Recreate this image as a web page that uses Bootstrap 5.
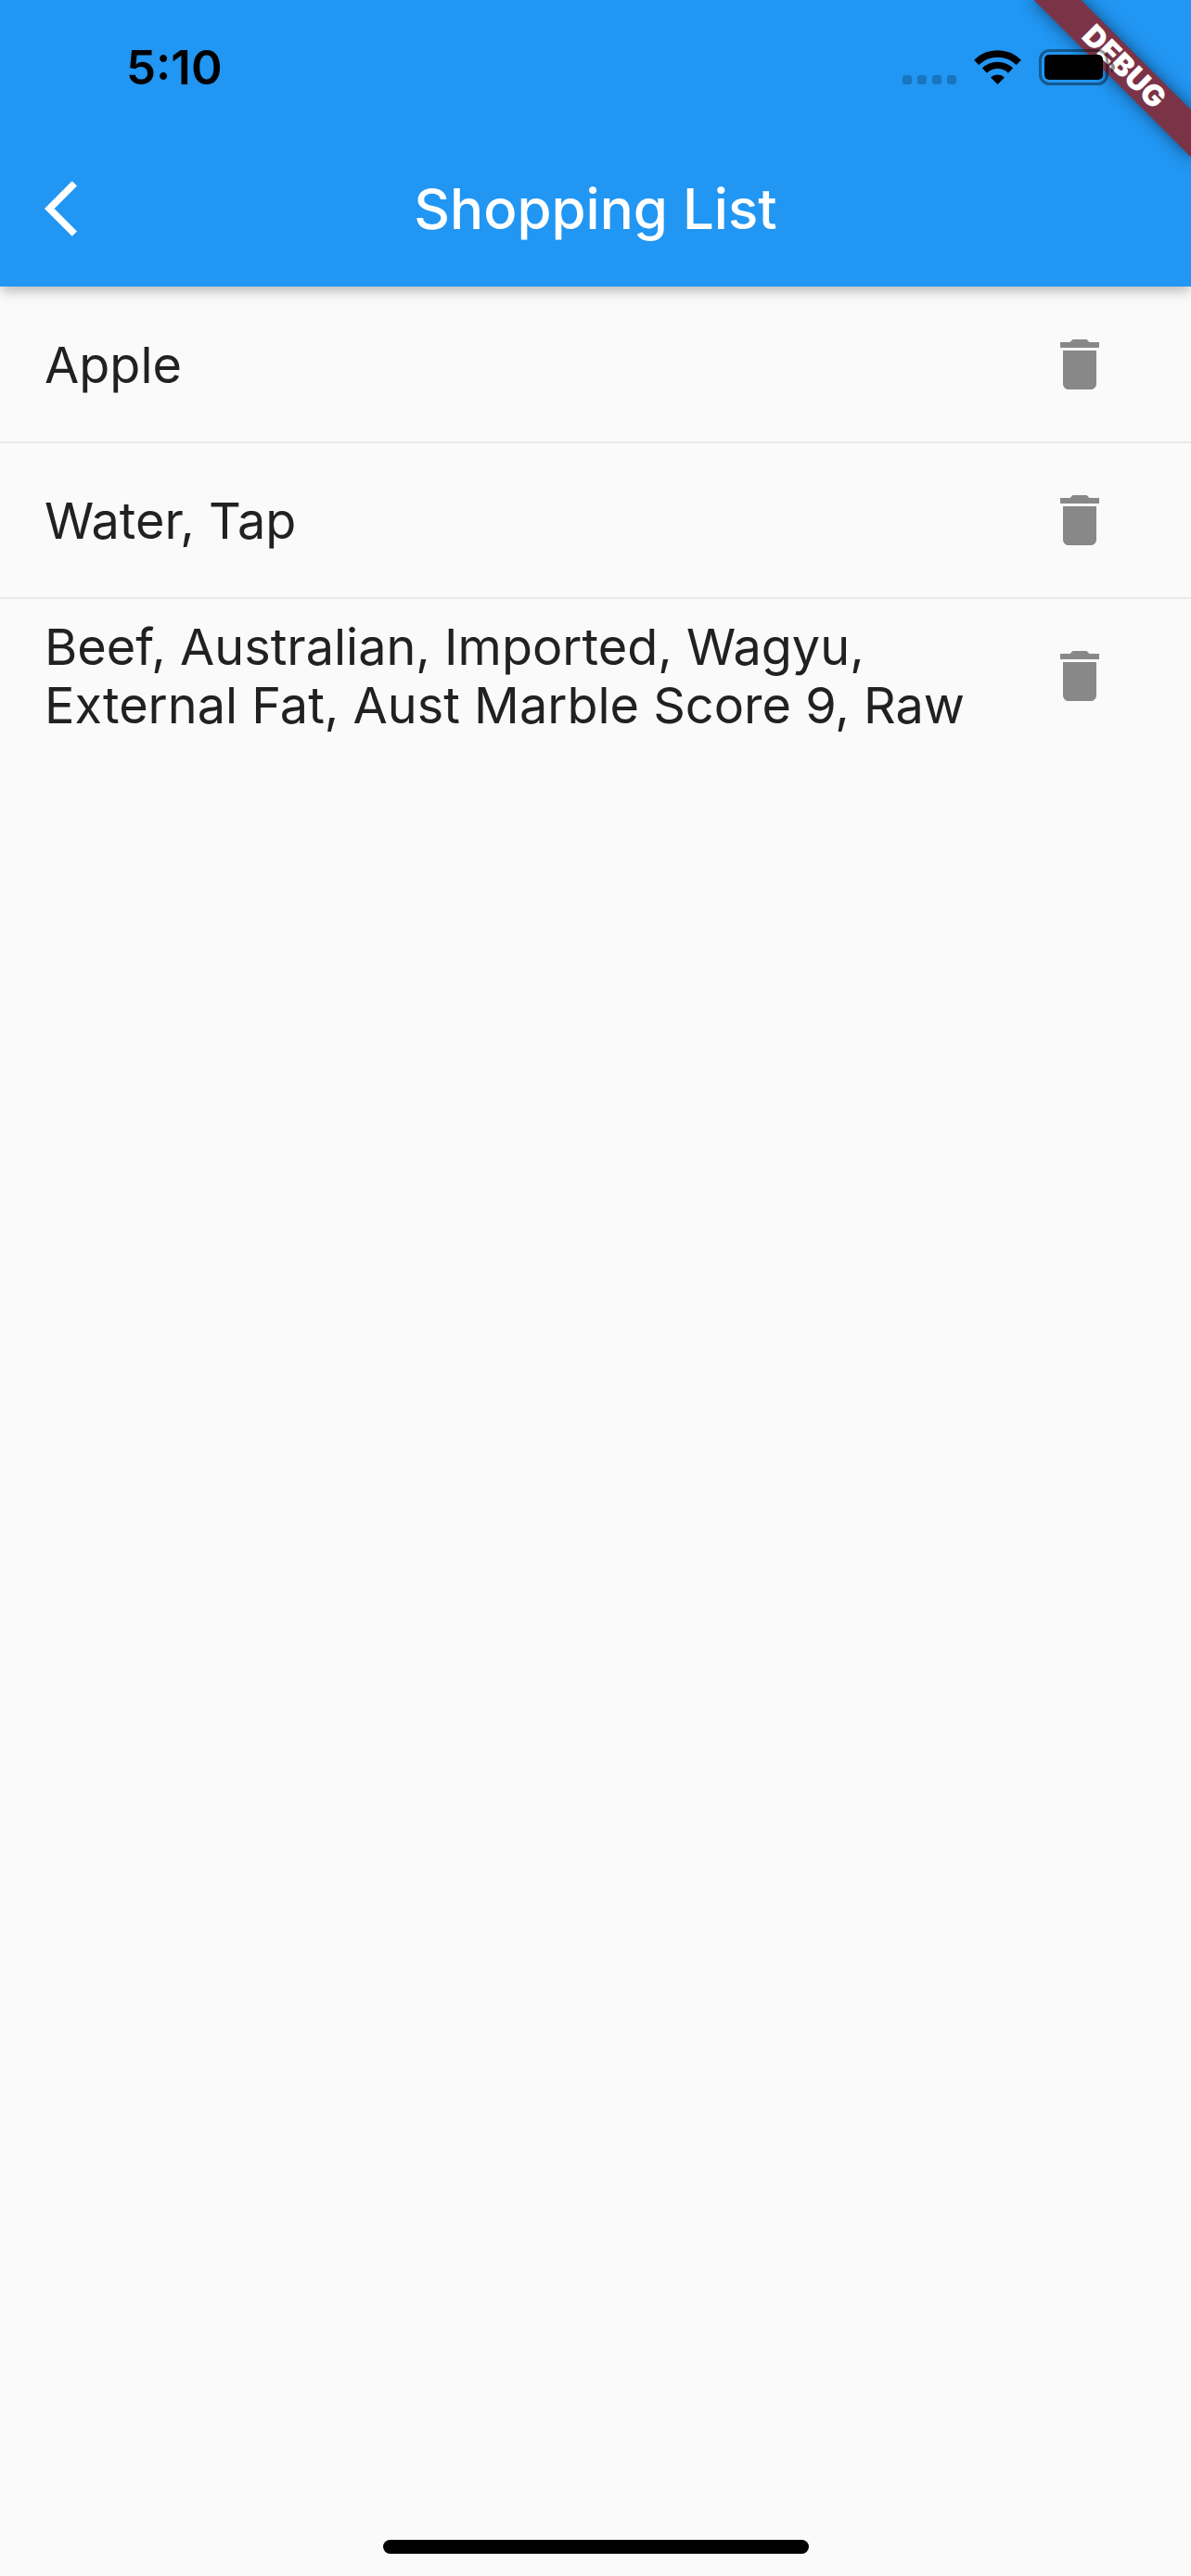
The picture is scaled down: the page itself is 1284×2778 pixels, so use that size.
<!DOCTYPE html>
<html lang="en">
<head>
<meta charset="utf-8">
<meta name="viewport" content="width=device-width, initial-scale=1">
<title>Shopping List</title>
<link rel="stylesheet" href="https://cdn.jsdelivr.net/npm/bootstrap@5.3.0/dist/css/bootstrap.min.css">
<style>
  body { background: #fafafa; color: #212121; font-family: Inter, "Noto Sans", sans-serif; }
  .top-area { background: #2196f3; box-shadow: 0 6px 12px -1px rgba(0, 0, 0, .26); }
  .status-bar { height: 141px; padding: 4px 80px 0 136px; color: #000; }
  .clock { font-size: 51px; font-weight: 600; line-height: 60px; }
  .status-icons { gap: 19px; z-index: 3; }
  .app-bar { min-height: 168px; padding: 0 48px; color: #fff; }
  .app-title { font-size: 60px; font-weight: 500; line-height: 72px; }
  .bar-side { width: 144px; }
  .shopping-row { min-height: 168px; padding: 0 48px; }
  .shopping-row + .shopping-row { box-shadow: 0 -1px #e9e9e9, inset 0 1px #e9e9e9; }
  .item-name { font-size: 54px; line-height: 63px; }
  .delete-btn { width: 144px; height: 144px; color: #888; }
  .corner-clip { width: 240px; height: 240px; z-index: 2; pointer-events: none; }
  .ribbon {
    top: 54px; right: -48px; width: 240px; height: 36px;
    transform: rotate(45deg);
    background: #7b3347;
    color: #fff; font-size: 32px; font-weight: 900; line-height: 36px;
    box-shadow: 0 0 18px rgba(0, 0, 0, .5);
  }
  .home-indicator { width: 459px; height: 15px; border-radius: 8px; background: #000; }
  .home-area { padding-bottom: 24px; }
</style>
</head>
<body>
<div class="d-flex flex-column min-vh-100 position-relative">
  <header class="top-area position-relative">
    <div class="status-bar d-flex align-items-center justify-content-between">
      <time class="clock">5:10</time>
      <div class="status-icons d-flex align-items-center position-relative">
        <svg width="58" height="38" viewBox="0 0 58 38" fill="#000" fill-opacity=".22" aria-hidden="true">
          <rect x="0" y="27" width="10" height="10" rx="3"/>
          <rect x="16" y="27" width="10" height="10" rx="3"/>
          <rect x="32" y="27" width="10" height="10" rx="3"/>
          <rect x="48" y="27" width="10" height="10" rx="3"/>
        </svg>
        <svg width="51" height="38" viewBox="0 0 51 38" aria-hidden="true">
          <g fill="none" stroke="#000" stroke-width="7.4">
            <path d="M2.7 13.3A32.6 32.6 0 0 1 48.3 13.3"/>
            <path d="M11.5 22.1A20.1 20.1 0 0 1 39.5 22.1"/>
          </g>
          <path d="M25.500 37L18 29.500A11 11 0 0 1 33 29.500Z" fill="#000"/>
        </svg>
        <svg width="84" height="40" viewBox="0 0 84 40" aria-hidden="true">
          <rect x="1.500" y="1.500" width="72" height="36" rx="10" fill="none" stroke="#000" stroke-opacity=".4" stroke-width="3"/>
          <rect x="6" y="6" width="63" height="27" rx="5"/>
          <path d="M78 14Q82 16 82 19.500T78 25Z" fill-opacity=".45"/>
        </svg>
      </div>
    </div>
    <nav class="app-bar d-flex align-items-center justify-content-between" aria-label="Page">
      <button type="button" class="btn bar-side border-0 p-0 text-white text-start d-flex" aria-label="Back">
        <svg width="72" height="72" viewBox="0 0 24 24" fill="currentColor" aria-hidden="true"><path d="M11.670 3.870L9.900 2.100 0 12l9.900 9.900 1.770-1.770L3.540 12z"/></svg>
      </button>
      <h1 class="app-title m-0 text-center">Shopping List</h1>
      <span class="bar-side"></span>
    </nav>
    <div class="corner-clip position-absolute top-0 end-0 overflow-hidden">
      <div class="ribbon position-absolute text-center">DEBUG</div>
    </div>
  </header>

  <main class="flex-grow-1">
    <ul class="list-unstyled m-0">
      <li class="shopping-row d-flex align-items-center">
        <span class="item-name flex-grow-1">Apple</span>
        <button type="button" class="btn delete-btn border-0 p-0 flex-shrink-0" aria-label="Delete Apple">
          <svg width="72" height="72" viewBox="0 0 24 24" fill="currentColor" aria-hidden="true"><path d="M6 19c0 1.100.9 2 2 2h8c1.100 0 2-.9 2-2V7H6zM19 4h-3.500l-1-1h-5l-1 1H5v2h14z"/></svg>
        </button>
      </li>
      <li class="shopping-row d-flex align-items-center">
        <span class="item-name flex-grow-1">Water, Tap</span>
        <button type="button" class="btn delete-btn border-0 p-0 flex-shrink-0" aria-label="Delete Water, Tap">
          <svg width="72" height="72" viewBox="0 0 24 24" fill="currentColor" aria-hidden="true"><path d="M6 19c0 1.100.9 2 2 2h8c1.100 0 2-.9 2-2V7H6zM19 4h-3.500l-1-1h-5l-1 1H5v2h14z"/></svg>
        </button>
      </li>
      <li class="shopping-row d-flex align-items-center">
        <span class="item-name flex-grow-1">Beef, Australian, Imported, Wagyu, External Fat, Aust Marble Score 9, Raw</span>
        <button type="button" class="btn delete-btn border-0 p-0 flex-shrink-0" aria-label="Delete Beef">
          <svg width="72" height="72" viewBox="0 0 24 24" fill="currentColor" aria-hidden="true"><path d="M6 19c0 1.100.9 2 2 2h8c1.100 0 2-.9 2-2V7H6zM19 4h-3.500l-1-1h-5l-1 1H5v2h14z"/></svg>
        </button>
      </li>
    </ul>
  </main>

  <footer class="home-area d-flex justify-content-center">
    <div class="home-indicator"></div>
  </footer>
</div>
<script src="https://cdn.jsdelivr.net/npm/bootstrap@5.3.0/dist/js/bootstrap.bundle.min.js"></script>
</body>
</html>
